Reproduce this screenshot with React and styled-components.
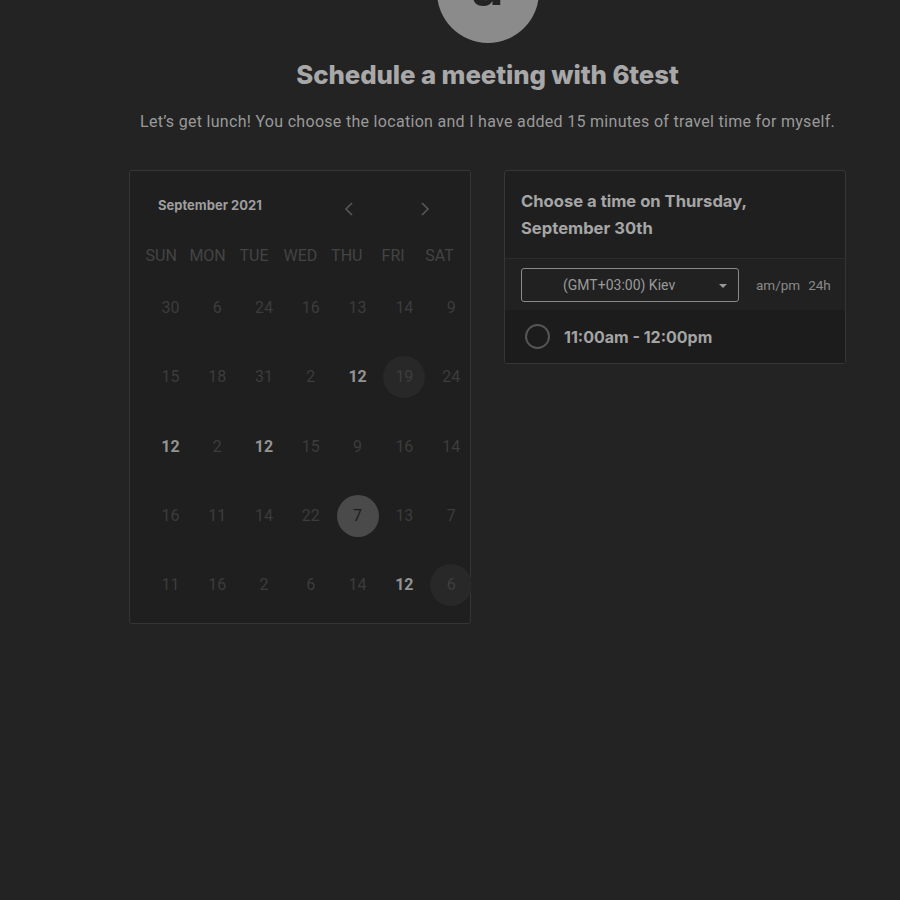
import React from "react";
import styled, { createGlobalStyle, css } from "styled-components";

const GlobalStyle = createGlobalStyle`
  html, body {
    margin: 0;
    background: #232323;
    font-family: Roboto, "Liberation Sans", sans-serif;
    overflow: hidden;
  }
`;

const weekDays = ["SUN", "MON", "TUE", "WED", "THU", "FRI", "SAT"];

// kind: "" dim, "b" bright bold, "h" hover circle, "s" selected
const weeks = [
  [["30"], ["6"], ["24"], ["16"], ["13"], ["14"], ["9"]],
  [["15"], ["18"], ["31"], ["2"], ["12", "b"], ["19", "h"], ["24"]],
  [["12", "b"], ["2"], ["12", "b"], ["15"], ["9"], ["16"], ["14"]],
  [["16"], ["11"], ["14"], ["22"], ["7", "s"], ["13"], ["7"]],
  [["11"], ["16"], ["2"], ["6"], ["14"], ["12", "b"], ["6", "h"]],
];

const App = () => {
  return (
    <Page>
      <GlobalStyle />
      <Avatar>a</Avatar>
      <Title>Schedule a meeting with 6test</Title>
      <Subtitle>
        Let’s get lunch! You choose the location and I have added 15 minutes of
        travel time for myself.
      </Subtitle>
      <Columns>
        <CalendarCard>
          <MonthBar>
            <MonthName>September 2021</MonthName>
            <Arrows>
              <ArrowBtn>
                <svg width="10" height="16" viewBox="0 0 10 16">
                  <path d="M8 2 L2 8 L8 14" fill="none" stroke="currentColor" strokeWidth="1.6" />
                </svg>
              </ArrowBtn>
              <ArrowBtn>
                <svg width="10" height="16" viewBox="0 0 10 16">
                  <path d="M2 2 L8 8 L2 14" fill="none" stroke="currentColor" strokeWidth="1.6" />
                </svg>
              </ArrowBtn>
            </Arrows>
          </MonthBar>
          <WeekHeader>
            {weekDays.map((d) => (
              <WeekDay key={d}>{d}</WeekDay>
            ))}
          </WeekHeader>
          <DaysGrid>
            {weeks.map((row, i) =>
              row.map(([n, kind], j) => (
                <DayCell key={i + "-" + j}>
                  <Day $kind={kind}>{n}</Day>
                </DayCell>
              ))
            )}
          </DaysGrid>
        </CalendarCard>

        <TimeCard>
          <TimeHeader>Choose a time on Thursday, September 30th</TimeHeader>
          <ZoneRow>
            <ZoneSelect>
              (GMT+03:00) Kiev
              <Caret />
            </ZoneSelect>
            <FormatToggle>
              <span>am/pm</span>
              <span>24h</span>
            </FormatToggle>
          </ZoneRow>
          <Slot>
            <Radio />
            <SlotText>11:00am - 12:00pm</SlotText>
          </Slot>
        </TimeCard>
      </Columns>
    </Page>
  );
};

const Page = styled.div`
  display: flex;
  flex-direction: column;
  align-items: center;
  padding-left: 75px;
  height: 900px;
`;

const Avatar = styled.div`
  width: 102px;
  height: 102px;
  margin-top: -59px;
  border-radius: 50%;
  background: #8b8b8b;
  color: #232323;
  font-family: Inter, "Liberation Sans", sans-serif;
  font-weight: 700;
  font-size: 56px;
  display: flex;
  align-items: center;
  justify-content: center;
  line-height: 1;
  padding-bottom: 14px;
  box-sizing: border-box;
`;

const Title = styled.h1`
  margin: 16px 0 0;
  font-family: Inter, "Liberation Sans", sans-serif;
  font-weight: 800;
  font-size: 25.8px;
  line-height: 32px;
  color: #a8a8a8;
  letter-spacing: -0.1px;
`;

const Subtitle = styled.p`
  margin: 20px 0 0;
  font-size: 16px;
  line-height: 22px;
  color: #9a9a9a;
  letter-spacing: 0.3px;
  white-space: nowrap;
`;

const Columns = styled.div`
  display: flex;
  gap: 33px;
  margin-top: 37px;
  align-items: flex-start;
`;

const cardBase = css`
  width: 342px;
  flex-shrink: 0;
  box-sizing: border-box;
  border: 1px solid #363636;
  border-radius: 3px;
  background: #1f1f1f;
`;

const CalendarCard = styled.div`
  ${cardBase};
  height: 454px;
  padding: 0 0 0 8px;
`;

const MonthBar = styled.div`
  display: flex;
  align-items: center;
  padding: 22px 0 0 20px;
  height: 24px;
`;

const MonthName = styled.div`
  font-family: Inter, "Liberation Sans", sans-serif;
  font-weight: 700;
  font-size: 13px;
  color: #9e9e9e;
  width: 186px;
`;

const Arrows = styled.div`
  display: flex;
  gap: 66px;
  margin-top: 8px;
`;

const ArrowBtn = styled.div`
  color: #575757;
  width: 10px;
  height: 16px;
  display: flex;
`;

const WeekHeader = styled.div`
  display: grid;
  grid-template-columns: repeat(7, 46.4px);
  margin-top: 29px;
`;

const WeekDay = styled.div`
  text-align: center;
  font-size: 16px;
  line-height: 20px;
  color: #444444;
`;

const DaysGrid = styled.div`
  display: grid;
  grid-template-columns: repeat(7, 46.8px);
  grid-auto-rows: 69.3px;
  margin: 7px 0 0 9px;
`;

const DayCell = styled.div`
  display: flex;
  align-items: center;
  justify-content: center;
`;

const Day = styled.div`
  width: 42px;
  height: 42px;
  border-radius: 50%;
  display: flex;
  align-items: center;
  justify-content: center;
  font-size: 16px;
  color: #3c3c3c;
  ${(p) =>
    p.$kind === "b" &&
    css`
      color: #939393;
      font-weight: 700;
    `}
  ${(p) =>
    p.$kind === "h" &&
    css`
      background: #282828;
      color: #3e3e3e;
    `}
  ${(p) =>
    p.$kind === "s" &&
    css`
      background: #4a4a4a;
      color: #1c1c1c;
    `}
`;

const TimeCard = styled.div`
  ${cardBase};
  overflow: hidden;
`;

const TimeHeader = styled.div`
  font-family: Inter, "Liberation Sans", sans-serif;
  font-weight: 700;
  font-size: 16.6px;
  line-height: 27px;
  color: #a6a6a6;
  padding: 17px 60px 16px 16px;
  border-bottom: 1px solid #2c2c2c;
`;

const ZoneRow = styled.div`
  display: flex;
  align-items: center;
  padding: 9px 12px 8px 16px;
  background: #212121;
`;

const ZoneSelect = styled.div`
  position: relative;
  flex-shrink: 0;
  width: 218px;
  height: 34px;
  box-sizing: border-box;
  border: 1px solid #8a8a8a;
  border-radius: 3px;
  font-size: 14px;
  color: #9a9a9a;
  display: flex;
  align-items: center;
  padding-left: 41px;
`;

const Caret = styled.span`
  position: absolute;
  right: 11px;
  top: 15px;
  border-left: 4px solid transparent;
  border-right: 4px solid transparent;
  border-top: 4px solid #9a9a9a;
`;

const FormatToggle = styled.div`
  display: flex;
  gap: 8px;
  margin-left: 17px;
  font-size: 13.5px;
  color: #8a8a8a;
  white-space: nowrap;
`;

const Slot = styled.div`
  display: flex;
  align-items: center;
  height: 53px;
  padding-left: 20px;
  background: #1c1c1c;
`;

const Radio = styled.span`
  width: 21px;
  height: 21px;
  border: 2px solid #555;
  border-radius: 50%;
`;

const SlotText = styled.span`
  margin-left: 14px;
  font-family: Inter, "Liberation Sans", sans-serif;
  font-weight: 700;
  font-size: 16px;
  color: #a4a4a4;
`;

export default App;
